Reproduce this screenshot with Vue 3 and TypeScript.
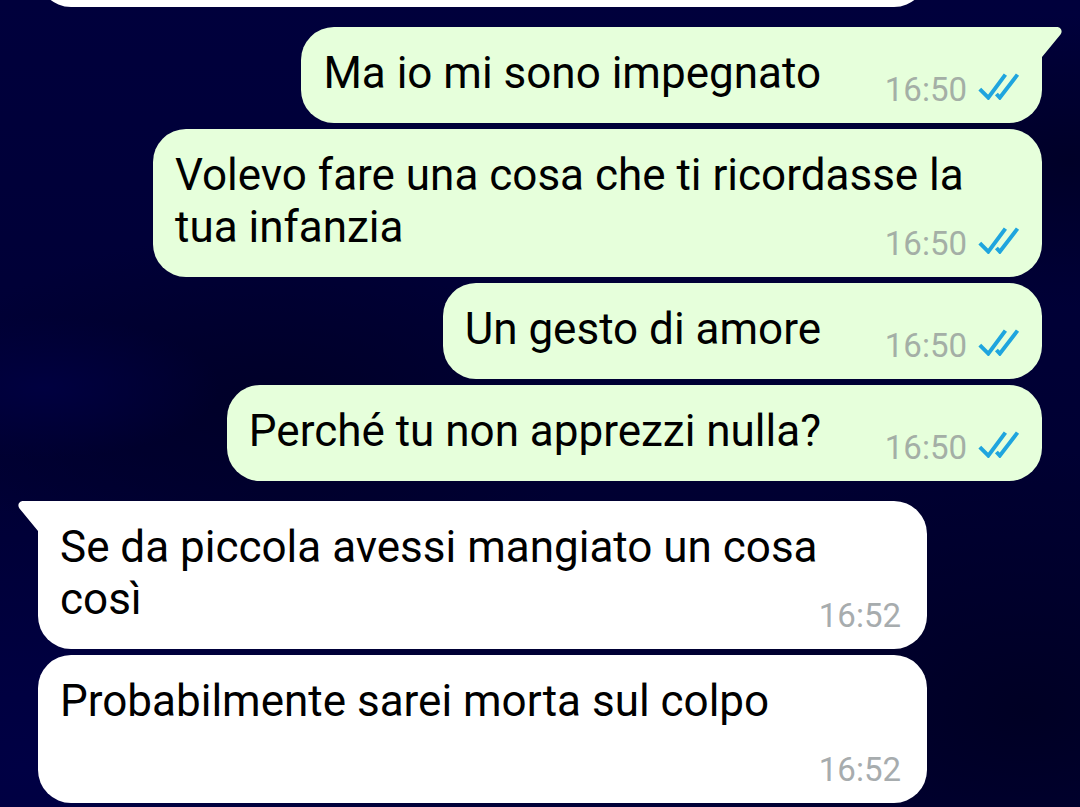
<script setup lang="ts">
interface Message {
  text: string
  time: string
  sent: boolean
  first: boolean
}

const messages: Message[] = [
  { text: 'Ma io mi sono impegnato', time: '16:50', sent: true, first: true },
  { text: 'Volevo fare una cosa che ti ricordasse la tua infanzia', time: '16:50', sent: true, first: false },
  { text: 'Un gesto di amore', time: '16:50', sent: true, first: false },
  { text: 'Perché tu non apprezzi nulla?', time: '16:50', sent: true, first: false },
  { text: 'Se da piccola avessi mangiato un cosa così', time: '16:52', sent: false, first: true },
  { text: 'Probabilmente sarei morta sul colpo', time: '16:52', sent: false, first: false },
]
</script>

<template>
  <main class="chat">
    <div class="bubble received previous" aria-hidden="true"></div>
    <article
      v-for="(m, i) in messages"
      :key="i"
      class="bubble"
      :class="[m.sent ? 'sent' : 'received', { first: m.first }]"
    >
      <svg v-if="m.first" class="tail" viewBox="0 0 20 30" aria-hidden="true">
        <path d="M0 0H15C19 0 21 4.500 18.500 7.500L0 30Z" fill="currentColor" />
      </svg>
      <p class="text">{{ m.text }}<span class="reserve"></span></p>
      <footer class="meta">
        <time class="time">{{ m.time }}</time>
        <svg v-if="m.sent" class="ticks" viewBox="0 0 42 28" role="img" aria-label="Letto">
          <path d="M1.800 17.200L10.300 25.600L27.400 2.600M18.400 22L21.800 25.600L39.500 2.600" />
        </svg>
      </footer>
    </article>
  </main>
</template>

<style>
body {
  margin: 0;
  background: #000034;
}
</style>

<style scoped>
.chat {
  box-sizing: border-box;
  height: 100vh;
  overflow: hidden;
  padding: 0 38px;
  display: flex;
  flex-direction: column;
  gap: 6px;
  font-family: Roboto, "Liberation Sans", sans-serif;
  background:
    radial-gradient(ellipse at 4% 48%, #000040 0, transparent 12%),
    radial-gradient(ellipse at 25% 50%, #000028 0, transparent 30%),
    radial-gradient(ellipse at 95% 88%, #000024 0, transparent 26%),
    radial-gradient(ellipse at 99% 20%, #000028 0, transparent 16%),
    radial-gradient(ellipse at 2% 95%, #000044 0, transparent 30%),
    linear-gradient(#00003c, #000038 30%, #000032 60%, #000038);
}

.bubble {
  position: relative;
  flex: none;
  box-sizing: border-box;
  display: grid;
  max-width: calc(100% - 115px);
  padding: 20px 22px 24px;
  border-radius: 33px;
}

.sent {
  --reserve: 199px;
  align-self: flex-end;
  color: #e6ffdb;
  background: #e6ffdb;
}

.received {
  --reserve: 150px;
  align-self: flex-start;
  color: #ffffff;
  background: #ffffff;
}

.previous {
  width: 100%;
  height: 96px;
  margin-top: -89px;
}

.first {
  margin-top: 14px;
}

.sent.first {
  border-top-right-radius: 0;
}

.received.first {
  border-top-left-radius: 0;
}

.tail {
  position: absolute;
  top: 0;
  left: 100%;
  width: 20px;
  height: 30px;
}

.received .tail {
  left: auto;
  right: 100%;
  transform: scaleX(-1);
}

.text,
.meta {
  grid-area: 1 / 1;
}

.text {
  margin: 0;
  font-size: 44px;
  line-height: 52px;
  color: #000000;
}

.reserve {
  display: inline-block;
  width: var(--reserve);
  height: 1px;
}

.meta {
  align-self: end;
  justify-self: end;
  display: flex;
  align-items: flex-start;
  gap: 11px;
  height: 27px;
  color: #a7acae;
}

.time {
  font-size: 33px;
  line-height: 36px;
}

.sent .meta {
  color: #a4afa6;
}

.received .meta {
  padding-right: 4px;
}

.ticks {
  width: 42px;
  height: 28px;
  fill: none;
  stroke: #1fa5de;
  stroke-width: 4;
}
</style>
